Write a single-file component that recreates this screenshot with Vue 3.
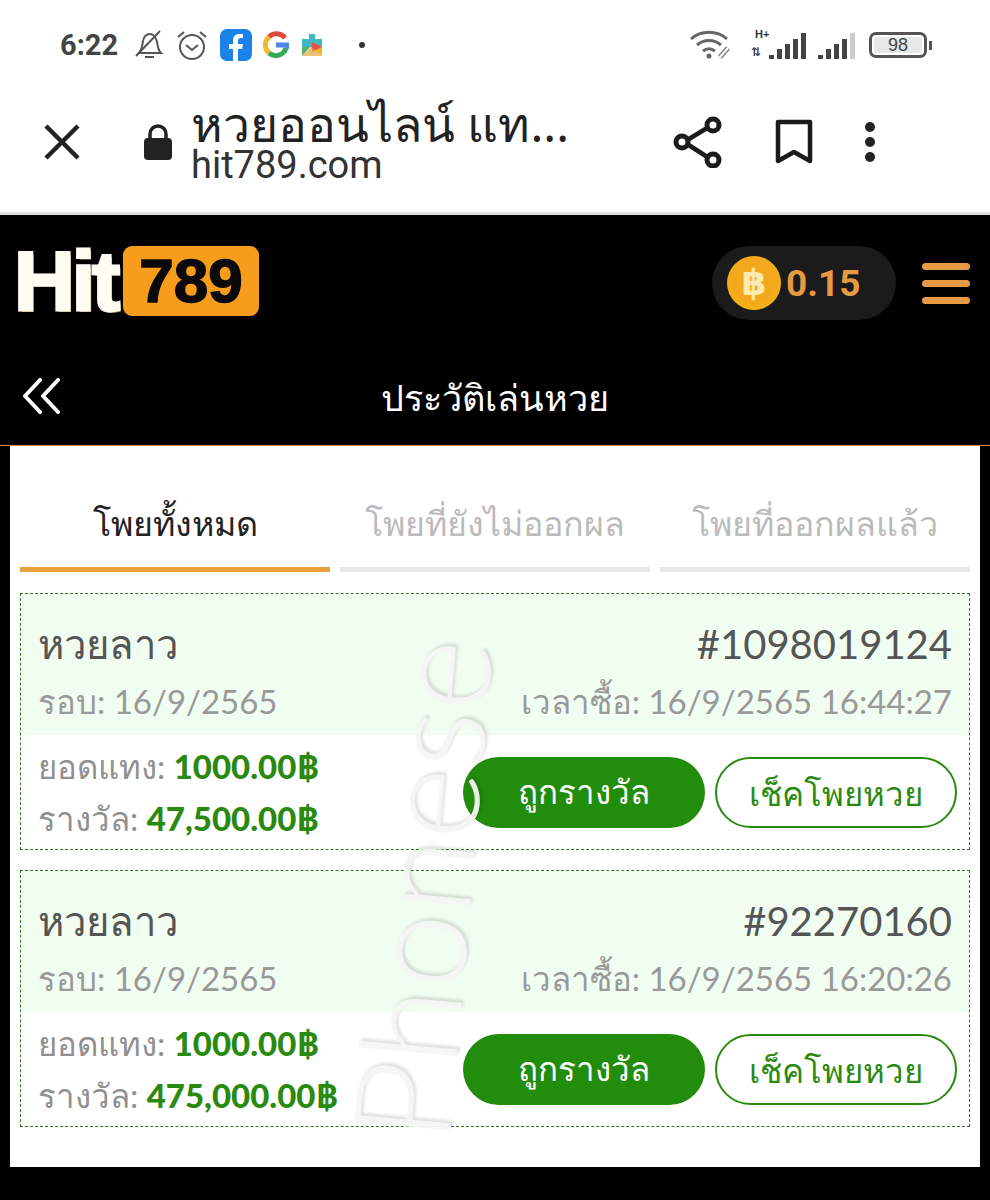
<script setup>
const tabs = [
  { label: 'โพยทั้งหมด', active: true },
  { label: 'โพยที่ยังไม่ออกผล', active: false },
  { label: 'โพยที่ออกผลแล้ว', active: false },
]
const cards = [
  { id: '#1098019124', time: '16/9/2565 16:44:27', prize: '47,500.00฿' },
  { id: '#92270160', time: '16/9/2565 16:20:26', prize: '475,000.00฿' },
]
const bars = [
  [3, 1], [3, 1], [3, 1], [3, 1],
]
</script>

<template>
  <div class="page">
    <div class="status">
      <div class="status-left">
        <span class="clock">6:22</span>
        <svg class="si" width="30" height="32" viewBox="0 0 30 32" fill="none" stroke="#555" stroke-width="2">
          <path d="M5 24c3-3 3-7 4-12 1-5 4-7 7-7s6 3 7 8c1 5 1 8 4 11z" />
          <path d="M2 27 26 2" />
          <path d="M11 28h9" />
        </svg>
        <svg class="si" width="34" height="34" viewBox="0 0 34 34" fill="none" stroke="#555" stroke-width="2">
          <circle cx="17" cy="19" r="12" />
          <path d="M11 17l6 5 6-5" />
          <path d="M3 9l6-5M31 9l-6-5" />
        </svg>
        <svg class="si" width="32" height="32" viewBox="0 0 32 32">
          <rect width="32" height="32" rx="7" fill="#1a82e8" />
          <path d="M18 32V20h4l1-5h-5v-3c0-2 1-3 3-3h2V5h-4c-4 0-6 3-6 6v4h-4v5h4v12z" fill="#fff" />
        </svg>
        <svg class="si" width="26" height="28" viewBox="0 0 26 28" fill="none" stroke-width="5">
          <path d="M22 7A10.500 10.500 0 0 0 6 6" stroke="#e04a3a" />
          <path d="M6 6a10.500 10.500 0 0 0 0 16" stroke="#f0b92c" />
          <path d="M6 22a10.500 10.500 0 0 0 17-5" stroke="#3aa757" />
          <path d="M13 14h11c0 1 0 2-1 3" stroke="#4a85ea" />
        </svg>
        <svg class="si" width="24" height="30" viewBox="0 0 24 30">
          <path d="M9 4h6v5h7v8H2V9h7z" fill="#3fb8c4" />
          <path d="M2 17h8l-8 9z" fill="#52b36b" />
          <path d="M10 17h12v9z" fill="#f0b92c" />
          <path d="M12 12l10 5-10 5z" fill="#e8504a" />
          <path d="M2 26l9-9 11 9z" fill="#e8a83a" opacity=".7" />
        </svg>
        <span class="dot"></span>
      </div>
      <div class="status-right">
        <svg width="44" height="32" viewBox="0 0 44 32" fill="none" stroke="#666" stroke-width="3">
          <path d="M2 10c10-9 26-9 36 0" />
          <path d="M8 16c7-6 17-6 24 0" />
          <path d="M14 22c4-3 8-3 12 0" />
          <circle cx="20" cy="27" r="2.500" fill="#666" stroke="none" />
          <path d="M31 28l8-9" stroke-width="5" stroke="#888" />
          <path d="M31 28l8-9" stroke-width="2" stroke="#fff" />
        </svg>
        <div class="signal first">
          <span class="hplus">H+</span>
          <span class="arrows">⇅</span>
          <i v-for="h in [4, 10, 15, 20, 26]" :key="h" :style="{ height: h + 'px' }"></i>
        </div>
        <div class="signal">
          <i v-for="h in [4, 10, 15, 20]" :key="h" :style="{ height: h + 'px' }"></i>
          <i class="off"></i>
        </div>
        <div class="battery"><span>98</span></div>
        <span class="nub"></span>
      </div>
    </div>

    <div class="browser">
      <svg class="close" width="38" height="38" viewBox="0 0 38 38" stroke="#222" stroke-width="4.500">
        <path d="M3 3l32 32M35 3 3 35" />
      </svg>
      <svg class="lock" width="30" height="38" viewBox="0 0 30 38">
        <path d="M7 15V10a8 8 0 0 1 16 0v5" fill="none" stroke="#222" stroke-width="3.500" />
        <rect x="1" y="14" width="28" height="22" rx="4" fill="#222" />
      </svg>
      <div class="addr">
        <div class="addr-title">หวยออนไลน์ แท...</div>
        <div class="addr-url">hit789.com</div>
      </div>
      <svg class="share" width="50" height="52" viewBox="0 0 50 52" fill="none" stroke="#1b1b1b" stroke-width="4.500">
        <path d="M11 26 39 9M11 26l28 18" />
        <circle cx="40" cy="9" r="6" fill="#fff" stroke-width="5" />
        <circle cx="40" cy="44" r="6" fill="#fff" stroke-width="5" />
        <circle cx="9" cy="26" r="6" fill="#fff" stroke-width="5" />
      </svg>
      <svg class="mark" width="38" height="46" viewBox="0 0 38 46" fill="none" stroke="#1b1b1b" stroke-width="4.500">
        <path d="M3 3h32v39L19 33 3 42z" stroke-linejoin="round" />
      </svg>
      <div class="kebab"><span></span><span></span><span></span></div>
    </div>

    <header class="head">
      <div class="top">
        <div class="logo">
          <span class="hit">Hit</span>
          <span class="num">789</span>
        </div>
        <div class="top-right">
          <div class="wallet">
            <span class="coin">฿</span>
            <span class="amount">0.15</span>
          </div>
          <div class="burger"><span></span><span></span><span></span></div>
        </div>
      </div>
      <div class="titlebar">
        <svg class="back" width="40" height="36" viewBox="0 0 40 36" fill="none" stroke="#fff" stroke-width="4" stroke-linecap="round" stroke-linejoin="round">
          <path d="M18 2 3 18l15 16" />
          <path d="M36 2 21 18l15 16" />
        </svg>
        <span class="title">ประวัติเล่นหวย</span>
      </div>
    </header>

    <main class="panel">
      <nav class="tabs">
        <div v-for="t in tabs" :key="t.label" class="tab" :class="{ active: t.active }">{{ t.label }}</div>
      </nav>
      <section class="list">
        <article v-for="c in cards" :key="c.id" class="card">
          <div class="card-top">
            <div class="row">
              <span class="name">หวยลาว</span>
              <span class="name">{{ c.id }}</span>
            </div>
            <div class="row sub">
              <span>รอบ: 16/9/2565</span>
              <span>เวลาซื้อ: {{ c.time }}</span>
            </div>
          </div>
          <div class="card-bottom">
            <div class="money">
              <div>ยอดแทง: <b>1000.00฿</b></div>
              <div>รางวัล: <b>{{ c.prize }}</b></div>
            </div>
            <div class="actions">
              <span class="btn solid">ถูกรางวัล</span>
              <span class="btn outline">เช็คโพยหวย</span>
            </div>
          </div>
        </article>
      </section>
      <div class="watermark">Phonese</div>
    </main>
    <div class="foot"></div>
  </div>
</template>

<style>
html, body { margin: 0; background: #000; }
</style>

<style scoped>
.page {
  width: 990px;
  height: 1200px;
  overflow: hidden;
  background: #000;
  display: flex;
  flex-direction: column;
  font-family: Lato, "Noto Sans", "Liberation Sans", sans-serif;
}
.status {
  height: 72px;
  background: #fff;
  display: flex;
  justify-content: space-between;
  align-items: center;
  padding: 18px 58px 0 60px;
  box-sizing: border-box;
}
.status-left, .status-right { display: flex; align-items: center; }
.clock {
  font: 700 29px "Roboto", sans-serif;
  color: #444;
  margin-right: 16px;
}
.si { margin-right: 11px; flex: none; }
.dot { width: 6px; height: 6px; border-radius: 50%; background: #333; margin-left: 24px; }
.status-right { gap: 0; }
.signal { display: flex; align-items: flex-end; gap: 3px; height: 28px; position: relative; margin-left: 12px; }
.signal.first { padding-left: 18px; margin-left: 18px; }
.signal i { display: block; width: 5px; background: #444; }
.signal i.off { height: 26px; background: #ccc; }
.hplus { position: absolute; left: 4px; top: -3px; font: 700 11px "Liberation Sans", sans-serif; color: #333; }
.arrows { position: absolute; left: 0; bottom: 0; font: 700 12px "DejaVu Sans", sans-serif; color: #444; }
.battery {
  width: 58px;
  height: 26px;
  box-sizing: border-box;
  border: 3px solid #555;
  border-radius: 7px;
  margin-left: 14px;
  padding: 2px;
  display: flex;
}
.battery span {
  flex: 1;
  background: #e8e8e8;
  border-radius: 2px;
  font: 18px/17px "Liberation Sans", sans-serif;
  color: #444;
  text-align: center;
}
.nub { width: 3px; height: 9px; background: #555; margin-left: 2px; }

.browser {
  height: 143px;
  background: #fff;
  display: flex;
  align-items: center;
  padding-left: 43px;
  box-sizing: border-box;
  border-bottom: 3px solid #ddd;
}
.close { flex: none; margin-right: 62px; }
.lock { flex: none; margin-right: 18px; margin-top: 2px; }
.addr { width: 470px; flex: none; color: #222; margin-right: 12px; }
.addr-title { font: 48px/50px "Noto Sans", "DejaVu Sans", sans-serif; white-space: nowrap; color: #222; }
.addr-url { font: 38px/40px "Roboto", sans-serif; color: #333; margin-top: -4px; }
.share { flex: none; margin-right: 52px; }
.mark { flex: none; margin-right: 52px; }
.kebab { display: flex; flex-direction: column; gap: 5px; }
.kebab span { width: 10px; height: 10px; border-radius: 50%; background: #222; }

.head { background: #000; height: 230px; flex: none; border-bottom: 1px solid #c98a4a; box-sizing: content-box; }
.top { height: 136px; display: flex; justify-content: space-between; align-items: center; padding: 0 20px 0 14px; }
.logo { display: flex; align-items: center; gap: 6px; height: 72px; margin-top: -4px; }
.hit {
  font: 900 84px/72px "Liberation Sans", sans-serif;
  letter-spacing: -3px;
  color: #fffdf3;
  -webkit-text-stroke: 3px #fffdf3;
  text-shadow: 2px 2px 0 #b88c50;
}
.num {
  width: 136px;
  height: 70px;
  background: #f79d1b;
  border-radius: 9px;
  color: #0a0a0a;
  font: 900 62px/70px "Liberation Sans", sans-serif;
  -webkit-text-stroke: 1.500px #0a0a0a;
  text-align: center;
}
.top-right { display: flex; align-items: center; gap: 26px; }
.wallet {
  width: 184px;
  height: 74px;
  background: #1b1b1b;
  border-radius: 37px;
  display: flex;
  align-items: center;
  padding-left: 15px;
  box-sizing: border-box;
  gap: 5px;
}
.coin {
  width: 54px;
  height: 54px;
  border-radius: 50%;
  background: radial-gradient(circle at 50% 45%, #f2a91c 55%, #ffc107 100%);
  color: #ffe9b0;
  font: 700 36px/54px "Liberation Sans", "DejaVu Sans", sans-serif;
  text-align: center;
}
.amount { font: 700 37px "Roboto", sans-serif; color: #e79a44; }
.burger { display: flex; flex-direction: column; gap: 10px; }
.burger span { width: 48px; height: 7px; border-radius: 4px; background: #e79a44; }

.titlebar {
  height: 94px;
  display: flex;
  align-items: center;
  justify-content: center;
  position: relative;
}
.back { position: absolute; left: 22px; top: 27px; }
.title { font: 36px "Noto Sans", "DejaVu Sans", sans-serif; color: #fff; }

.panel {
  position: relative;
  margin: 0 10px;
  height: 721px;
  background: #fff;
  flex: none;
  padding: 0 10px;
  box-sizing: border-box;
  overflow: hidden;
}
.tabs { display: grid; grid-template-columns: repeat(3, 1fr); gap: 10px; padding-top: 46px; }
.tab {
  height: 80px;
  box-sizing: border-box;
  border-bottom: 5px solid #e7e7e7;
  text-align: center;
  font: 34px/62px "Noto Sans", sans-serif;
  color: #bbb;
  white-space: nowrap;
}
.tab.active { color: #222; border-bottom-color: #e8a13c; }
.list { display: flex; flex-direction: column; gap: 20px; padding-top: 21px; }
.card {
  width: 950px;
  height: 257px;
  box-sizing: border-box;
  border: 1px dashed #2d7a1e;
}
.card-top { height: 141px; background: #f2fdf1; padding: 24px 17px 0; box-sizing: border-box; }
.row { display: flex; justify-content: space-between; align-items: center; }
.name { font-size: 40px; line-height: 52px; color: #555; }
.sub { font-size: 33px; line-height: 46px; color: #999; margin-top: 8px; }
.card-bottom { height: 114px; display: flex; justify-content: space-between; align-items: center; padding: 0 12px 0 17px; }
.money { font-size: 33px; line-height: 52px; color: #909090; }
.money b { color: #2a8a10; font-weight: 900; }
.actions { display: flex; gap: 10px; }
.btn {
  width: 242px;
  height: 71px;
  border-radius: 36px;
  box-sizing: border-box;
  text-align: center;
  font: 33px/69px "Noto Sans", sans-serif;
}
.solid { background: #228c0c; color: #fff; }
.outline { border: 2px solid #2a8a10; color: #2a8a10; }
.watermark {
  position: absolute;
  left: 150px;
  top: 370px;
  width: 520px;
  height: 130px;
  font: 300 136px/130px Lato, sans-serif;
  color: rgba(246, 246, 246, 0.95);
  text-shadow: 3px 2px 3px rgba(0, 0, 0, 0.12);
  transform: rotate(-85deg);
  pointer-events: none;
}
.foot { flex: 1; background: #000; }
</style>
